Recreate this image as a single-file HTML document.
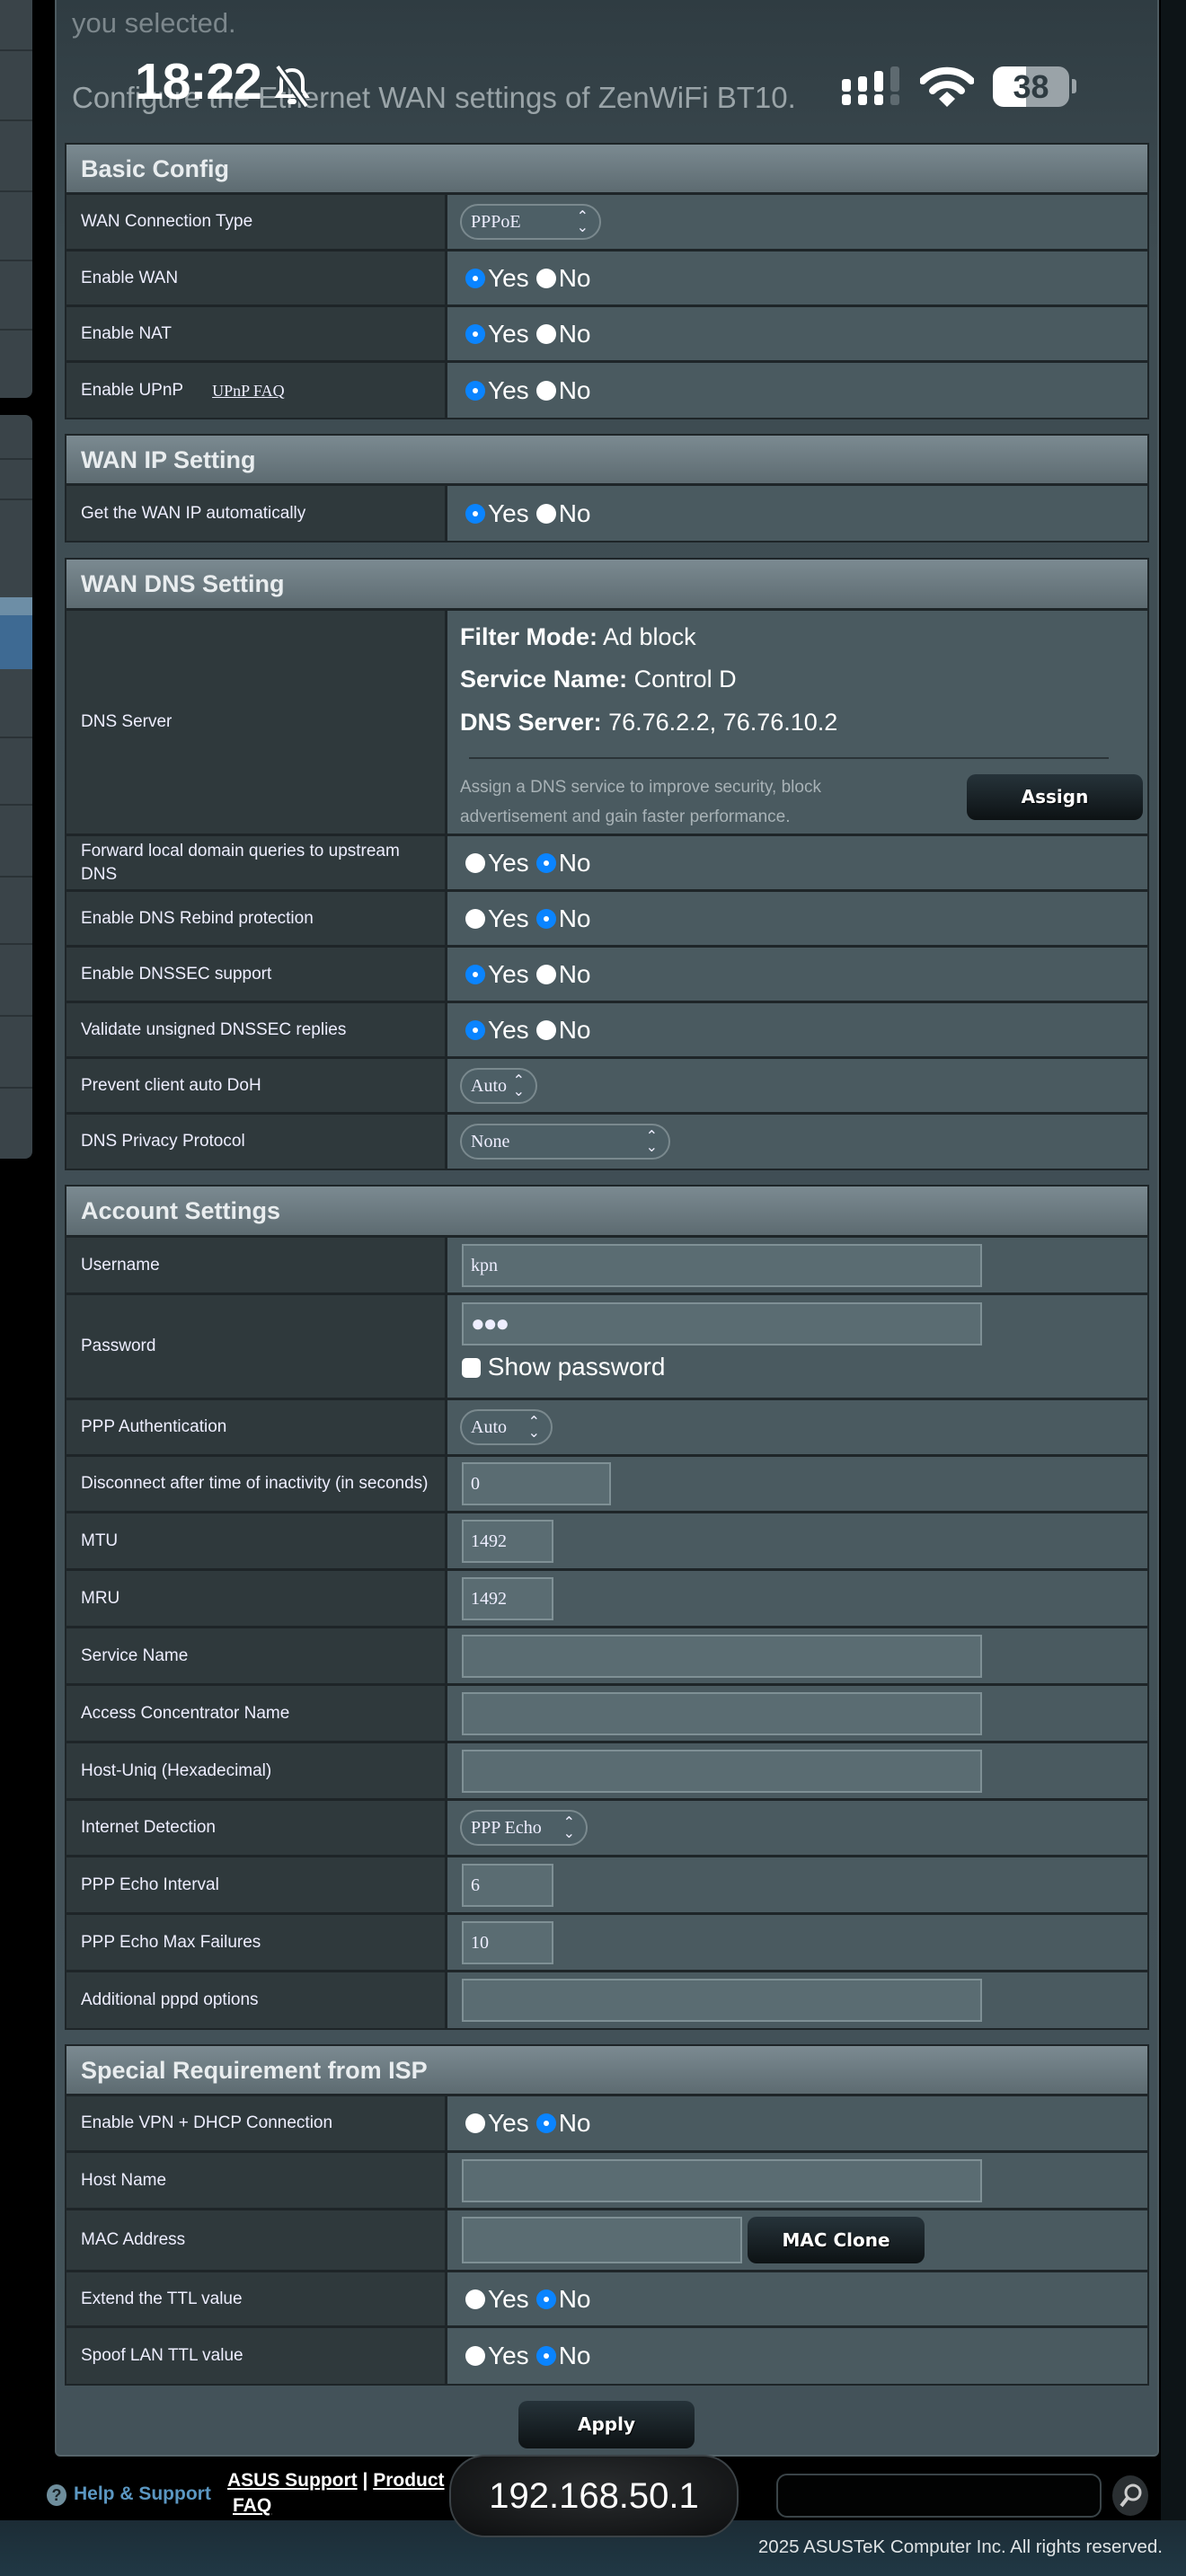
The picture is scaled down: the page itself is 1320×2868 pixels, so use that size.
<!DOCTYPE html>
<html><head><meta charset="utf-8">
<style>
*{box-sizing:border-box;margin:0;padding:0}
body{width:1320px;height:2868px;background:#000;position:relative;overflow:hidden;font-family:"Liberation Sans",sans-serif;color:#fff}
.abs{position:absolute}
.side{position:absolute;left:0;width:36px;background:#3a4449;border-radius:0 8px 8px 0}
.sl{position:absolute;left:0;width:36px;height:2px;background:#2a3236}
#panel{position:absolute;left:61px;top:0;width:1229px;height:2735px;background:linear-gradient(#2f3c42 0,#3e4c52 300px,#435259 2735px);border-left:2px solid #4d5b61;border-right:2px solid #4d5b61;border-bottom:2px solid #56656b;border-radius:0 0 6px 6px}
.sec{position:absolute;left:72px;width:1207px;border:2px solid #1e2528;background:#1e2528}
.hd{height:56px;background:linear-gradient(#7b8a91,#5d6b71);color:#e9edef;font-weight:bold;font-size:27px;line-height:54px;padding-left:16px;border-bottom:3px solid #1e2528}
.row{display:flex;border-bottom:3px solid #1e2528}
.row:last-child{border-bottom:0}
.lb{width:421px;background:#2f393c;font-size:19px;color:#eef;padding-left:16px;padding-right:40px;display:flex;align-items:center;line-height:26px;margin-right:3px}
.vl{flex:1;background:#4a5a60;display:flex;align-items:center;padding-left:20px;position:relative}
.r{display:inline-block;width:22px;height:22px;border-radius:50%;background:#fff;vertical-align:-3px;position:relative}
.r.on{background:#0a84ff}
.r.on:after{content:"";position:absolute;left:8px;top:8px;width:6px;height:6px;border-radius:50%;background:#fff}
.rt{font-size:28px;margin:0 8px 0 3px}
.sel{height:40px;border:2px solid #7a898e;border-radius:20px;background:#4d5f66;font-family:"Liberation Serif",serif;font-size:20px;line-height:36px;padding-left:10px;position:relative;color:#eef}
.sel:after{content:"\2303";position:absolute;right:12px;top:-6px;font-size:16px;font-family:"DejaVu Sans",sans-serif}
.sel:before{content:"\2304";position:absolute;right:12px;top:6px;font-size:16px;font-family:"DejaVu Sans",sans-serif}
.in{height:48px;border:2px solid #7f9095;background:#5a6c72;font-family:"Liberation Serif",serif;font-size:20px;line-height:44px;padding-left:8px;color:#eef;margin-left:-4px}
.btn{background:linear-gradient(#26333a,#0d1214);border-radius:10px;color:#fff;font-weight:bold;font-family:"DejaVu Sans",sans-serif;font-size:20px;text-align:center;text-shadow:1px 1px 1px #000}
</style></head><body>
<div class="side" style="top:0;height:443px;border-radius:0 0 8px 0"></div>
<div class="sl" style="top:55px"></div><div class="sl" style="top:133px"></div><div class="sl" style="top:212px"></div><div class="sl" style="top:289px"></div><div class="sl" style="top:366px"></div>
<div class="side" style="top:462px;height:828px;border-radius:0 8px 8px 0"></div>
<div class="sl" style="top:510px"></div><div class="sl" style="top:555px"></div>
<div class="abs" style="left:0;top:665px;width:36px;height:80px;background:linear-gradient(#6d8ea6 0,#6d8ea6 25%,#3e6a93 25%)"></div>
<div class="sl" style="top:820px"></div><div class="sl" style="top:895px"></div><div class="sl" style="top:975px"></div><div class="sl" style="top:1050px"></div><div class="sl" style="top:1130px"></div><div class="sl" style="top:1210px"></div>
<div class="abs" style="left:1292px;top:0;width:28px;height:2806px;background:#0d1417"></div>

<div id="panel"></div>
<div class="abs" style="left:80px;top:8px;font-size:31px;color:#7c878c">you selected.</div>
<div class="abs" style="left:80px;top:90px;font-size:33px;color:#9aa4a8">Configure the Ethernet WAN settings of ZenWiFi BT10.</div>
<div class="abs" style="left:150px;top:58px;font-size:57px;font-weight:bold;letter-spacing:-1px">18:22</div>
<svg class="abs" style="left:300px;top:70px" width="50" height="52" viewBox="0 0 50 52"><path d="M25 8c-8 0-12 6-12 13v10l-4 6h32l-4-6V21c0-7-4-13-12-13z" fill="none" stroke="#fff" stroke-width="4"/><rect x="20" y="40" width="10" height="6" rx="3" fill="#fff"/><path d="M9 4l32 44" stroke="#2f3c42" stroke-width="8"/><path d="M9 4l32 44" stroke="#fff" stroke-width="4"/></svg>
<svg class="abs" style="left:935px;top:72px" width="70" height="48"><g fill="#fff"><rect x="2" y="16" width="10" height="14" rx="3"/><rect x="2" y="33" width="10" height="12" rx="3"/><rect x="20" y="13" width="10" height="17" rx="3"/><rect x="20" y="33" width="10" height="12" rx="3"/><rect x="38" y="7" width="10" height="23" rx="3"/><rect x="38" y="33" width="10" height="12" rx="3"/></g><g fill="#5e6a70"><rect x="56" y="2" width="10" height="28" rx="3"/><rect x="56" y="33" width="10" height="12" rx="3"/></g></svg>
<svg class="abs" style="left:1024px;top:74px" width="60" height="46" viewBox="0 0 60 46"><path d="M3 16a38 38 0 0 1 54 0" stroke="#fff" stroke-width="8" fill="none" stroke-linecap="round"/><path d="M14 27a22 22 0 0 1 32 0" stroke="#fff" stroke-width="8" fill="none" stroke-linecap="round"/><path d="M21 36l9-8 9 8-9 9z" fill="#fff"/></svg>
<div class="abs" style="left:1105px;top:74px;width:85px;height:45px;border-radius:12px;background:linear-gradient(90deg,#fff 37px,#9aa3a8 37px);color:#2e3b41;font-weight:bold;font-size:36px;text-align:center;line-height:45px">38</div>
<div class="abs" style="left:1193px;top:88px;width:5px;height:16px;border-radius:0 3px 3px 0;background:#9aa3a8"></div>

<div class="sec" style="top:159px">
<div class="hd">Basic Config</div>
<div class="row" style="height:63px"><div class="lb">WAN Connection Type</div><div class="vl" style="padding-left:14px"><div class="sel" style="width:157px">PPPoE</div></div></div>
<div class="row" style="height:62px"><div class="lb">Enable WAN</div><div class="vl"><span class="r on"></span><span class="rt">Yes</span><span class="r"></span><span class="rt">No</span></div></div>
<div class="row" style="height:62px"><div class="lb">Enable NAT</div><div class="vl"><span class="r on"></span><span class="rt">Yes</span><span class="r"></span><span class="rt">No</span></div></div>
<div class="row" style="height:61px"><div class="lb">Enable UPnP<span style="font-family:'Liberation Serif',serif;text-decoration:underline;margin-left:32px;font-size:18px">UPnP FAQ</span></div><div class="vl"><span class="r on"></span><span class="rt">Yes</span><span class="r"></span><span class="rt">No</span></div></div>
</div>

<div class="sec" style="top:483px">
<div class="hd">WAN IP Setting</div>
<div class="row" style="height:61px"><div class="lb">Get the WAN IP automatically</div><div class="vl"><span class="r on"></span><span class="rt">Yes</span><span class="r"></span><span class="rt">No</span></div></div>
</div>

<div class="sec" style="top:621px">
<div class="hd" style="height:57px">WAN DNS Setting</div>
<div class="row" style="height:251px"><div class="lb">DNS Server</div><div class="vl" style="display:block;padding-left:0">
<div class="abs" style="left:14px;top:14px;font-size:27px"><b>Filter Mode:</b> Ad block</div>
<div class="abs" style="left:14px;top:61px;font-size:27px"><b>Service Name:</b> Control D</div>
<div class="abs" style="left:14px;top:109px;font-size:27px"><b>DNS Server:</b> 76.76.2.2, 76.76.10.2</div>
<div class="abs" style="left:24px;top:163px;width:712px;height:2px;background:#2b3438"></div>
<div class="abs" style="left:14px;top:180px;font-size:19px;color:#a8b2b6;line-height:33px">Assign a DNS service to improve security, block<br>advertisement and gain faster performance.</div>
<div class="btn abs" style="left:578px;top:182px;width:196px;height:51px;line-height:51px">Assign</div>
</div></div>
<div class="row" style="height:62px"><div class="lb">Forward local domain queries to upstream DNS</div><div class="vl"><span class="r"></span><span class="rt">Yes</span><span class="r on"></span><span class="rt">No</span></div></div>
<div class="row" style="height:62px"><div class="lb">Enable DNS Rebind protection</div><div class="vl"><span class="r"></span><span class="rt">Yes</span><span class="r on"></span><span class="rt">No</span></div></div>
<div class="row" style="height:62px"><div class="lb">Enable DNSSEC support</div><div class="vl"><span class="r on"></span><span class="rt">Yes</span><span class="r"></span><span class="rt">No</span></div></div>
<div class="row" style="height:62px"><div class="lb">Validate unsigned DNSSEC replies</div><div class="vl"><span class="r on"></span><span class="rt">Yes</span><span class="r"></span><span class="rt">No</span></div></div>
<div class="row" style="height:62px"><div class="lb">Prevent client auto DoH</div><div class="vl" style="padding-left:14px"><div class="sel" style="width:86px">Auto</div></div></div>
<div class="row" style="height:60px"><div class="lb">DNS Privacy Protocol</div><div class="vl" style="padding-left:14px"><div class="sel" style="width:234px">None</div></div></div>
</div>

<div class="sec" style="top:1319px">
<div class="hd" style="height:57px">Account Settings</div>
<div class="row" style="height:64px"><div class="lb">Username</div><div class="vl"><div class="in" style="width:579px">kpn</div></div></div>
<div class="row" style="height:117px"><div class="lb">Password</div><div class="vl" style="display:block;padding-top:8px"><div class="in" style="width:579px;font-size:26px;letter-spacing:-2px">●●●</div><div style="margin-top:8px;font-size:28px;margin-left:-4px"><span style="display:inline-block;width:21px;height:22px;background:#fff;border-radius:5px;vertical-align:-3px"></span> Show password</div></div></div>
<div class="row" style="height:63px"><div class="lb">PPP Authentication</div><div class="vl" style="padding-left:14px"><div class="sel" style="width:103px">Auto</div></div></div>
<div class="row" style="height:63px"><div class="lb" style="padding-right:4px">Disconnect after time of inactivity (in seconds)</div><div class="vl"><div class="in" style="width:166px">0</div></div></div>
<div class="row" style="height:64px"><div class="lb">MTU</div><div class="vl"><div class="in" style="width:102px">1492</div></div></div>
<div class="row" style="height:64px"><div class="lb">MRU</div><div class="vl"><div class="in" style="width:102px">1492</div></div></div>
<div class="row" style="height:64px"><div class="lb">Service Name</div><div class="vl"><div class="in" style="width:579px"></div></div></div>
<div class="row" style="height:64px"><div class="lb">Access Concentrator Name</div><div class="vl"><div class="in" style="width:579px"></div></div></div>
<div class="row" style="height:64px"><div class="lb">Host-Uniq (Hexadecimal)</div><div class="vl"><div class="in" style="width:579px"></div></div></div>
<div class="row" style="height:63px"><div class="lb">Internet Detection</div><div class="vl" style="padding-left:14px"><div class="sel" style="width:142px">PPP Echo</div></div></div>
<div class="row" style="height:64px"><div class="lb">PPP Echo Interval</div><div class="vl"><div class="in" style="width:102px">6</div></div></div>
<div class="row" style="height:64px"><div class="lb">PPP Echo Max Failures</div><div class="vl"><div class="in" style="width:102px">10</div></div></div>
<div class="row" style="height:62px"><div class="lb">Additional pppd options</div><div class="vl"><div class="in" style="width:579px"></div></div></div>
</div>

<div class="sec" style="top:2276px">
<div class="hd">Special Requirement from ISP</div>
<div class="row" style="height:63px"><div class="lb">Enable VPN + DHCP Connection</div><div class="vl"><span class="r"></span><span class="rt">Yes</span><span class="r on"></span><span class="rt">No</span></div></div>
<div class="row" style="height:64px"><div class="lb">Host Name</div><div class="vl"><div class="in" style="width:579px"></div></div></div>
<div class="row" style="height:69px"><div class="lb">MAC Address</div><div class="vl"><div class="in" style="width:312px;height:52px"></div><div class="btn" style="width:197px;height:52px;line-height:52px;margin-left:6px">MAC Clone</div></div></div>
<div class="row" style="height:62px"><div class="lb">Extend the TTL value</div><div class="vl"><span class="r"></span><span class="rt">Yes</span><span class="r on"></span><span class="rt">No</span></div></div>
<div class="row" style="height:62px"><div class="lb">Spoof LAN TTL value</div><div class="vl"><span class="r"></span><span class="rt">Yes</span><span class="r on"></span><span class="rt">No</span></div></div>
</div>

<div class="btn abs" style="left:577px;top:2673px;width:196px;height:53px;line-height:53px">Apply</div>

<div class="abs" style="left:0;top:2806px;width:1320px;height:62px;background:linear-gradient(#1c2c35,#203845)"></div>
<div class="abs" style="left:52px;top:2766px;width:22px;height:24px;border-radius:50%;background:#6f8e9c;color:#1a2226;font-weight:bold;font-size:18px;text-align:center;line-height:24px">?</div>
<div class="abs" style="left:82px;top:2765px;font-size:21px;font-weight:bold;color:#5b97c2">Help &amp; Support</div>
<div class="abs" style="left:253px;top:2748px;font-size:21px;font-weight:bold;line-height:28px"><u>ASUS Support</u> | <u>Product</u><br><span style="margin-left:6px"><u>FAQ</u></span></div>
<div class="abs" style="left:500px;top:2733px;width:322px;height:92px;border-radius:40px;background:radial-gradient(ellipse at 50% 40%,#2a2d2f,#0d0e0f);border:2px solid #3b4246;font-size:40px;text-align:center;line-height:88px">192.168.50.1</div>
<div class="abs" style="left:864px;top:2754px;width:362px;height:49px;border:2px solid #3a4448;border-radius:12px;background:#020303"></div>
<div class="abs" style="left:1238px;top:2756px;width:40px;height:45px;border-radius:50%;background:#2a2f32"></div>
<svg class="abs" style="left:1240px;top:2760px" width="36" height="38"><circle cx="21" cy="15" r="8" fill="none" stroke="#ccc" stroke-width="3"/><path d="M15 21L8 30" stroke="#ccc" stroke-width="4"/></svg>
<div class="abs" style="right:26px;top:2824px;font-size:20.5px;color:#e0e4e6">2025 ASUSTeK Computer Inc. All rights reserved.</div>
</body></html>
